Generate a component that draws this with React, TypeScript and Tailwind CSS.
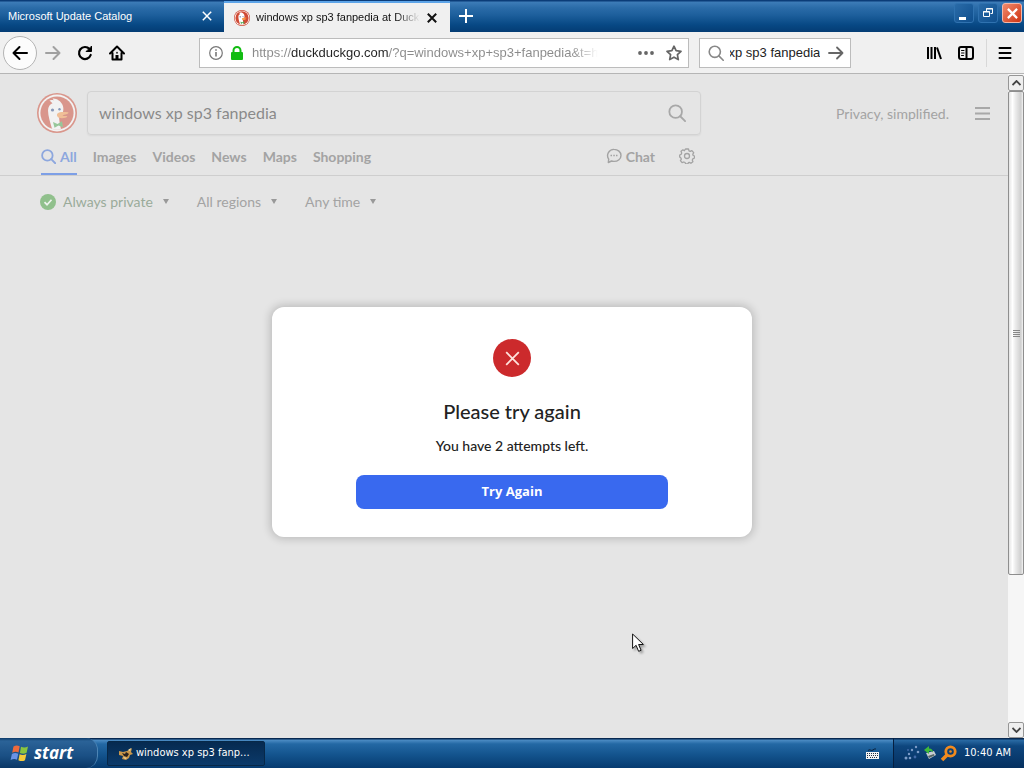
import { useEffect, useRef } from "react";
import type { ReactNode } from "react";

function CloseGlyph({ className }: { className: string }) {
  return (
    <svg viewBox="0 0 10 10" className={className} fill="none" stroke="currentColor" aria-hidden="true">
      <path d="M.8.8l8.4 8.4M9.2.8L.8 9.2" />
    </svg>
  );
}

function DuckIcon({ className }: { className: string }) {
  return (
    <svg viewBox="0 0 40 40" className={className} aria-hidden="true">
      <circle cx="20" cy="20" r="20" fill="#cf4a35" />
      <circle cx="20" cy="20" r="18.4" fill="#fff" />
      <circle cx="20" cy="20" r="16.6" fill="#cf4a35" />
      <path
        d="M15 35.8C13.400 30 11 23 11 17.5c0-4 2-6.200 4.500-7.300L12.500 7.600c1-.9 3-.8 4.300-.2l-1.200-2c4-.3 8.400 2.700 10 6.500 1 2.500 1 5 .2 7.500l-3.600 3.200c-.4 2.700.6 8.200 1.800 13.600A16.600 16.600 0 0 1 15 35.800z"
        fill="#fff"
      />
      <circle cx="15.500" cy="17" r="1.600" fill="#2d4f8e" />
      <circle cx="22.500" cy="16.300" r="1.200" fill="#2d4f8e" />
      <path d="M20.500 20.500c2-1.500 5-1.800 10.500-1.200 1 .3.500 1.300-1 1.700-2 .6-4 1-4.600 1.600 1.600.8 4 .3 5 .8-1 1.500-5.500 2.300-8.400 1.300-1.600-.6-2.800-2.700-1.500-4.200z" fill="#fb9b4b" />
      <path d="M16 29l4.500 2 4.500-2.800 1 6-4.500-1.700-4 2.300z" fill="#4cab52" />
    </svg>
  );
}

function Lens({ className, width }: { className: string; width: number }) {
  return (
    <svg viewBox="0 0 20 20" className={className} fill="none" stroke="currentColor" strokeWidth={width} strokeLinecap="round" aria-hidden="true">
      <circle cx="8.500" cy="8.500" r="7" />
      <path d="M13.600 13.600L19 19" />
    </svg>
  );
}

function TabStrip() {
  return (
    <header className="flex h-8 bg-[linear-gradient(#0b3c78_0,#0b3c78_1px,#3d7cb8_2px,#2a6ba8_8px,#1d5f9c_15px,#074884_25px,#043c74_100%)] text-[11px]">
      <div className="flex w-56 items-center justify-between pr-3 pl-2 text-white">
        <a href="#catalog">Microsoft Update Catalog</a>
        <button aria-label="Close Microsoft Update Catalog">
          <CloseGlyph className="size-[10px] stroke-[1.5]" />
        </button>
      </div>
      <div className="mt-px flex w-[226px] items-center border-t-2 border-[#5da4e8] bg-[#f0f0f0] pr-[13px] pl-[10px] text-[#111]">
        <DuckIcon className="mr-[6px] size-4 shrink-0" />
        <a href="#search" className="w-[166px] overflow-hidden whitespace-nowrap [mask-image:linear-gradient(to_right,#000_140px,transparent_164px)]">
          windows xp sp3 fanpedia at DuckDuckGo
        </a>
        <button aria-label="Close tab" className="ml-auto">
          <CloseGlyph className="size-[10px] stroke-2" />
        </button>
      </div>
      <button aria-label="New tab" className="px-[9px] text-white">
        <svg viewBox="0 0 14 14" className="size-[14px]" stroke="currentColor" strokeWidth="2" aria-hidden="true">
          <path d="M7 0v14M0 7h14" />
        </svg>
      </button>
      <div className="ml-auto flex items-start gap-1 pt-[3px] pr-[2px]">
        <button aria-label="Minimize" className="flex size-5 items-end justify-start rounded-[3px] border border-[#2f72b0] bg-[linear-gradient(135deg,#2a6ba8,#0f4f8e)] pb-[2px] pl-1">
          <span className="h-[3px] w-[7px] bg-white" />
        </button>
        <button aria-label="Restore" className="flex size-5 items-center justify-center rounded-[3px] border border-[#2f72b0] bg-[linear-gradient(135deg,#2a6ba8,#0f4f8e)]">
          <svg viewBox="0 0 12 12" className="size-3" fill="none" stroke="#fff" aria-hidden="true">
            <path d="M4.500 4V1.500h6v5H8.500M4 2h7" />
            <path d="M1.500 4.500h6v5h-6zM1 5h7" />
          </svg>
        </button>
        <button aria-label="Close window" className="flex size-5 items-center justify-center rounded-[3px] border border-[#f4b7a8] bg-[linear-gradient(135deg,#f08a6c,#cf3412)] text-white">
          <CloseGlyph className="size-[11px] stroke-2" />
        </button>
      </div>
    </header>
  );
}

function ToolButton({ label, className, children }: { label: string; className: string; children: ReactNode }) {
  return (
    <button aria-label={label} className={className}>
      <svg viewBox="0 0 16 16" className="size-4" fill="none" stroke="currentColor" strokeWidth="2" strokeLinecap="round" strokeLinejoin="round" aria-hidden="true">
        {children}
      </svg>
    </button>
  );
}

function NavBar() {
  const searchRef = useRef<HTMLInputElement>(null);
  useEffect(() => {
    if (searchRef.current) searchRef.current.scrollLeft = searchRef.current.scrollWidth;
  }, []);
  return (
    <nav className="flex h-[42px] items-center border-b border-[#b5b5b5] bg-[#f0f0f0] pr-[11px] pl-[3px] text-black">
      <ToolButton label="Back" className="flex size-[34px] items-center justify-center rounded-full border border-[#b4b4b4] bg-[#fcfcfc]">
        <path d="M15 8H1.500M7.500 2L1.500 8l6 6" />
      </ToolButton>
      <ToolButton label="Forward" className="ml-2 text-[#a0a0a0]">
        <path d="M1 8h13.500M8.500 2l6 6-6 6" />
      </ToolButton>
      <ToolButton label="Reload" className="ml-4">
        <path d="M13.700 10A6 6 0 1 1 12.500 4" strokeWidth="2.200" />
        <path d="M14.500 1.500v5h-5z" fill="currentColor" strokeWidth="1" />
      </ToolButton>
      <ToolButton label="Home" className="ml-4">
        <path d="M1 8.500L8 1.500l7 7M3.500 8v6.500h9V8" />
        <path d="M8 14v-4" strokeWidth="3" strokeLinecap="butt" />
        <path d="M8 7.500V8" strokeWidth="1.500" />
      </ToolButton>
      <div className="ml-[74px] flex h-[30px] w-[490px] items-center border border-[#bcbcbc] bg-white pr-[6px] pl-[9px]">
        <button aria-label="Site information">
          <svg viewBox="0 0 14 14" className="size-[14px]" fill="none" stroke="#777" strokeWidth="1.200" aria-hidden="true">
            <circle cx="7" cy="7" r="6.300" />
            <path d="M7 6v4.500M7 3.200v1.500" strokeWidth="1.600" />
          </svg>
        </button>
        <svg viewBox="0 0 12 14" className="ml-2 h-[14px] w-3" aria-hidden="true">
          <rect y="6" width="12" height="8" rx="1" fill="#12bc12" />
          <path d="M2.500 7V4.500a3.500 3.500 0 0 1 7 0V7" fill="none" stroke="#12bc12" strokeWidth="2" />
        </svg>
        <input
          aria-label="Address"
          readOnly
          value="https://duckduckgo.com/?q=windows+xp+sp3+fanpedia&t=h_&ia=web"
          className="ml-[9px] min-w-0 flex-1 bg-[linear-gradient(to_right,#8a8a8a_39px,#222_39px,#222_137px,#8a8a8a_137px)] bg-clip-text text-[13px] text-transparent outline-none [mask-image:linear-gradient(to_right,#000_320px,transparent_346px)]"
        />
        <button aria-label="Page actions" className="ml-4">
          <svg viewBox="0 0 16 4" className="h-1 w-4" fill="#666" aria-hidden="true">
            <circle cx="2" cy="2" r="1.900" />
            <circle cx="8" cy="2" r="1.900" />
            <circle cx="14" cy="2" r="1.900" />
          </svg>
        </button>
        <button aria-label="Bookmark" className="ml-3">
          <svg viewBox="0 0 16 16" className="size-4" fill="none" stroke="#666" strokeWidth="1.700" strokeLinejoin="round" aria-hidden="true">
            <path d="M8 1.200l2.100 4.500 4.900.6-3.600 3.400.9 4.900L8 12.200l-4.300 2.400.9-4.900L1 6.300l4.900-.6z" />
          </svg>
        </button>
      </div>
      <div className="ml-[10px] flex h-[30px] w-[152px] items-center border border-[#bcbcbc] bg-white pr-[6px] pl-2">
        <Lens className="size-4 shrink-0 text-[#888]" width={2} />
        <input ref={searchRef} aria-label="Search the web" readOnly value="windows xp sp3 fanpedia" className="ml-[6px] w-[90px] text-[13px] text-[#222] outline-none" />
        <ToolButton label="Search" className="ml-auto text-[#666]">
          <path d="M1 8h13.500M9 2.500L14.500 8 9 13.500" strokeWidth="1.800" />
        </ToolButton>
      </div>
      <div className="ml-auto flex items-center">
        <ToolButton label="Library" className="">
          <path d="M2 2v12M5.500 2v12M9 2v12M11 2.500L15 14" strokeLinecap="butt" />
        </ToolButton>
        <ToolButton label="Sidebars" className="ml-4">
          <rect x="1" y="2" width="14" height="12" rx="2" />
          <path d="M8.500 2v12" />
          <path d="M3.500 5.500h2.500M3.500 8h2.500M3.500 10.500h2" strokeWidth="1" />
        </ToolButton>
        <span className="ml-3 h-7 w-px bg-[#d8d8d8]" />
        <ToolButton label="Menu" className="ml-[10px]">
          <path d="M2.500 3h11M2.500 8h11M2.500 13h11" />
        </ToolButton>
      </div>
    </nav>
  );
}

function Filter({ label }: { label: string }) {
  return (
    <button className="flex items-center gap-[10px]">
      {label}
      <svg viewBox="0 0 6 5" className="h-[5px] w-[6px]" fill="#999" aria-hidden="true">
        <path d="M0 0h6L3 5z" />
      </svg>
    </button>
  );
}

const verticals = ["Images", "Videos", "News", "Maps", "Shopping"];

function ResultsPage() {
  return (
    <div className="min-w-0 flex-1 bg-[#e5e5e5] font-['Lato',sans-serif] text-[#a3a3a3]">
      <div className="border-b border-[#cecece] pr-4 pl-[37px]">
        <div className="flex items-center pt-[17px]">
          <a href="#home" aria-label="DuckDuckGo home">
            <DuckIcon className="size-10 opacity-50" />
          </a>
          <div className="ml-[10px] flex h-11 w-[614px] items-center rounded border border-[#d3d3d3] pr-[14px] pb-px pl-[11px] shadow-[0_1px_2px_rgba(0,0,0,0.06)]">
            <input aria-label="Search query" readOnly value="windows xp sp3 fanpedia" className="min-w-0 flex-1 text-base text-[#8a8a8a] outline-none" />
            <button aria-label="Search">
              <Lens className="size-[18px] text-[#a8a8a8]" width={2} />
            </button>
          </div>
          <a href="#privacy" className="ml-auto text-[14px]">Privacy, simplified.</a>
          <button aria-label="Open menu" className="mr-[2px] ml-[26px]">
            <svg viewBox="0 0 15 13" className="h-[13px] w-[15px]" stroke="#a8a8a8" strokeWidth="2" aria-hidden="true">
              <path d="M0 1h15M0 6.500h15M0 12h15" />
            </svg>
          </button>
        </div>
        <div className="ml-1 flex h-10 w-[654px] items-stretch gap-4 text-[14px] font-bold">
          <a href="#all" className="flex items-center gap-1 border-b-2 border-[#7d9fe6] pt-1 text-[#8da7de]">
            <Lens className="size-[15px]" width={2.4} />
            All
          </a>
          {verticals.map((name) => (
            <a key={name} href={"#" + name.toLowerCase()} className="flex items-center pt-[2px]">
              {name}
            </a>
          ))}
          <a href="#chat" className="ml-auto flex items-center gap-1 pt-[2px]">
            <svg viewBox="0 0 16 16" className="size-4" fill="none" stroke="currentColor" strokeWidth="1.400" aria-hidden="true">
              <path d="M2.300 14.500l.4-3.400A6.200 6.200 0 0 1 8 1.400c3.900 0 7 2.600 7 6s-3.100 6-7 6c-1 0-1.700-.1-2.500-.4z" strokeLinejoin="round" />
              <path d="M4.500 7.500H6M7.300 7.500h1.500M10 7.500h1.500" strokeWidth="1.600" />
            </svg>
            Chat
          </a>
          <button aria-label="Settings" className="ml-2 pt-[2px]">
            <svg viewBox="0 0 16 16" className="size-4" fill="none" stroke="currentColor" strokeWidth="1.300" strokeLinejoin="round" aria-hidden="true">
              <path d="M6.500 1h3l.5 1.800 1.200.6 1.700-.8 1.800 2-.9 1.700.4 1.200 1.300.5v2l-1.700.9-.5 1.200.6 1.600-2 1.600-1.600-.9-.9.300-.6 1.300h-2l-.8-1.500-1.200-.5-1.700.7-1.700-2 .9-1.600-.4-1L.700 9V7l1.500-.8.500-1.300L2 3.300l1.900-1.500 1.500.9z" />
              <circle cx="8" cy="8" r="2.500" />
            </svg>
          </button>
        </div>
      </div>
      <div className="ml-10 flex items-center gap-7 pt-[15px] text-[14px]">
        <div className="flex items-center gap-[7px] text-[#9aab9a]">
          <svg viewBox="0 0 16 16" className="size-4" fill="none" aria-hidden="true">
            <circle cx="8" cy="8" r="8" fill="#90c08c" />
            <path d="M4.500 8.200l2.500 2.500 4.500-5" stroke="#eef3ee" strokeWidth="1.700" />
          </svg>
          <Filter label="Always private" />
        </div>
        <Filter label="All regions" />
        <Filter label="Any time" />
      </div>
    </div>
  );
}

function ScrollArrow({ label, path }: { label: string; path: string }) {
  return (
    <button aria-label={label} className="flex h-4 w-full shrink-0 items-center justify-center rounded-[2px] border border-[#969696] bg-[#efefef]">
      <svg viewBox="0 0 9 6" className="h-[6px] w-[9px]" fill="none" stroke="#444" strokeWidth="1.800" aria-hidden="true">
        <path d={path} />
      </svg>
    </button>
  );
}

function ScrollBar() {
  return (
    <div className="flex w-4 shrink-0 flex-col bg-[#f6f6f6] pt-px">
      <ScrollArrow label="Scroll up" path="M.5 5l4-4 4 4" />
      <div className="flex flex-1 flex-col">
        <div className="flex grow-[767] basis-0 items-center justify-center rounded-[2px] border border-[#8e8e8e] bg-[linear-gradient(to_right,#e4e4e4,#fff_25%,#ececec_45%,#cfcfcf_85%,#f4f4f4)]">
          <svg viewBox="0 0 7 7" className="size-[7px]" stroke="#888" aria-hidden="true">
            <path d="M0 .5h7M0 2.500h7M0 4.500h7M0 6.500h7" />
          </svg>
        </div>
        <div className="grow-[233] basis-0" />
      </div>
      <ScrollArrow label="Scroll down" path="M.5 1l4 4 4-4" />
    </div>
  );
}

function RetryDialog() {
  return (
    <div className="pointer-events-none absolute inset-0 flex items-center justify-center pt-8">
      <section
        role="dialog"
        aria-labelledby="retry-title"
        className="pointer-events-auto flex w-[480px] flex-col items-center rounded-xl bg-white px-[84px] pt-8 pb-7 text-center text-[#222] shadow-[0_0_8px_2px_rgba(0,0,0,0.18)]"
      >
        <span className="flex size-[38px] items-center justify-center rounded-full bg-[#cc2a2c] text-[#ffe3dc]">
          <CloseGlyph className="size-[15px] stroke-[1.2]" />
        </span>
        <h1 id="retry-title" className="mt-5 font-['Lato',sans-serif] text-[20px] leading-7 font-medium">Please try again</h1>
        <p className="mt-[11px] font-['Lato',sans-serif] text-[14px] leading-5 font-medium">You have 2 attempts left.</p>
        <button className="mt-[19px] h-[34px] w-full rounded-lg bg-[#3969ef] font-['Open_Sans',sans-serif] text-[13px] font-bold text-white">Try Again</button>
      </section>
    </div>
  );
}

function TaskBar() {
  return (
    <footer className="flex h-[30px] items-stretch bg-[linear-gradient(#082850_0,#082850_1px,#4c8cc4_2px,#2368a4_6px,#14558f_16px,#063b70_100%)] text-[11px] text-white">
      <button className="flex w-[98px] items-center gap-1 rounded-r-xl border-r border-[#4d85b5] bg-[linear-gradient(#0c3a68_0,#2b6398_3px,#1a4f84_60%,#0a3766)] pl-[10px] font-['Open_Sans',sans-serif] text-[17px] font-bold italic">
        <svg viewBox="0 0 20 18" className="h-[18px] w-5" aria-hidden="true">
          <path d="M3.500 2.500c2-1.200 4-1.300 6.200-.2L8.500 8.500c-2-1-4-.9-6.300.2z" fill="#ee6a3c" />
          <path d="M11 2.800c2.500 1.200 4.500 1 7-.2l-1.400 6.200c-2 1.100-4.200 1.300-6.700.1z" fill="#8bc53f" />
          <path d="M1.900 10c2.100-1.100 4.100-1.200 6.300-.2L7 15.700c-2-.9-4.200-.8-6.400.4z" fill="#6b93e6" />
          <path d="M9.600 10.300c2.400 1.100 4.500 1 6.800-.2l-1.400 6.100c-2.200 1.200-4.300 1.200-6.600 0z" fill="#f7cb3a" />
        </svg>
        start
      </button>
      <button className="mt-[3px] mb-[2px] ml-[9px] flex w-[158px] items-center gap-[2px] rounded-[2px] border border-[#072848] bg-[linear-gradient(#062a50,#0b3a6a)] pl-[10px] font-['DejaVu_Sans_Condensed','DejaVu_Sans',sans-serif] whitespace-nowrap">
        <svg viewBox="0 0 16 14" className="h-[14px] w-4 shrink-0" aria-hidden="true">
          <path d="M1 4l4 1 4-1 5-3-1 4 2 2-3 1-1 3-3 2-4-1 1-3-4-1z" fill="#c9974a" />
          <path d="M4 6l3 1 1-2 3 2-2 3-3-1z" fill="#2a2320" />
          <path d="M10 3l3-2-1 3zM5 10l2 2 2-1z" fill="#f2dca8" />
        </svg>
        windows xp sp3 fanp...
      </button>
      <button aria-label="Keyboard" className="mr-[14px] ml-auto">
        <svg viewBox="0 0 13 13" className="size-[13px]" aria-hidden="true">
          <path d="M2 3.500c2-2 3 1 5-.5s2-1 3-1" stroke="#0a1e38" fill="none" />
          <rect y="5" width="13" height="7" fill="#f4f4f4" />
          <path d="M1 6.500h11M1 8.500h11M1 10.500h2M4 10.500h5M10 10.500h2" stroke="#234" strokeDasharray="1 1" />
        </svg>
      </button>
      <div className="flex items-center gap-[3px] border-l border-[#061f40] bg-[linear-gradient(#082850_0,#082850_1px,#2a6ba5_2px,#0e467e_8px,#05305f_100%)] pr-[13px] pl-[10px] font-['DejaVu_Sans_Condensed','DejaVu_Sans',sans-serif]">
        <svg viewBox="0 0 16 16" className="size-4" fill="#7c9cc8" aria-hidden="true">
          <circle cx="2" cy="13" r="1.500" />
          <circle cx="5" cy="9" r="1.200" />
          <circle cx="6" cy="13" r="1.300" />
          <circle cx="8" cy="5" r="1.200" />
          <circle cx="12" cy="2" r="1.200" />
          <circle cx="14" cy="7" r="1.300" />
          <circle cx="11" cy="12" r="1.400" fill="#4069a8" />
          <circle cx="4" cy="5" r="1" fill="#4069a8" />
        </svg>
        <svg viewBox="0 0 14 16" className="h-4 w-[14px]" aria-hidden="true">
          <path d="M3 8l8-2 2 4-7 4z" fill="#c8cdd2" />
          <path d="M5 11l6-2 .5 1.500L6 13z" fill="#566" />
          <path d="M1 5l5-4v2.500c3 0 4 2 4 4-1.500-1.500-2.500-1.500-4-1.300V9z" fill="#3fb93b" />
        </svg>
        <svg viewBox="0 0 17 17" className="size-[17px]" fill="none" stroke="#f28a1e" aria-hidden="true">
          <circle cx="10.500" cy="6.500" r="4.700" strokeWidth="2.800" />
          <circle cx="10.500" cy="6.500" r="1.300" fill="#f28a1e" stroke="none" />
          <path d="M7 10l-5 5" strokeWidth="3.500" />
        </svg>
        <time className="ml-1">10:40 AM</time>
      </div>
    </footer>
  );
}

export default function App() {
  return (
    <div className="flex min-h-screen flex-col font-['Liberation_Sans',Arial,sans-serif]">
      <TabStrip />
      <NavBar />
      <main className="relative flex flex-1">
        <ResultsPage />
        <ScrollBar />
        <RetryDialog />
        <svg viewBox="0 0 13 20" className="absolute top-[559px] left-[632px] h-5 w-[13px] drop-shadow-[2px_2px_1px_rgba(0,0,0,0.3)]" aria-hidden="true">
          <path d="M.6 1v14.500l3.500-3.200 2.500 6 2.500-1-2.500-5.800h4.800z" fill="#fff" stroke="#111" />
        </svg>
      </main>
      <TaskBar />
    </div>
  );
}
